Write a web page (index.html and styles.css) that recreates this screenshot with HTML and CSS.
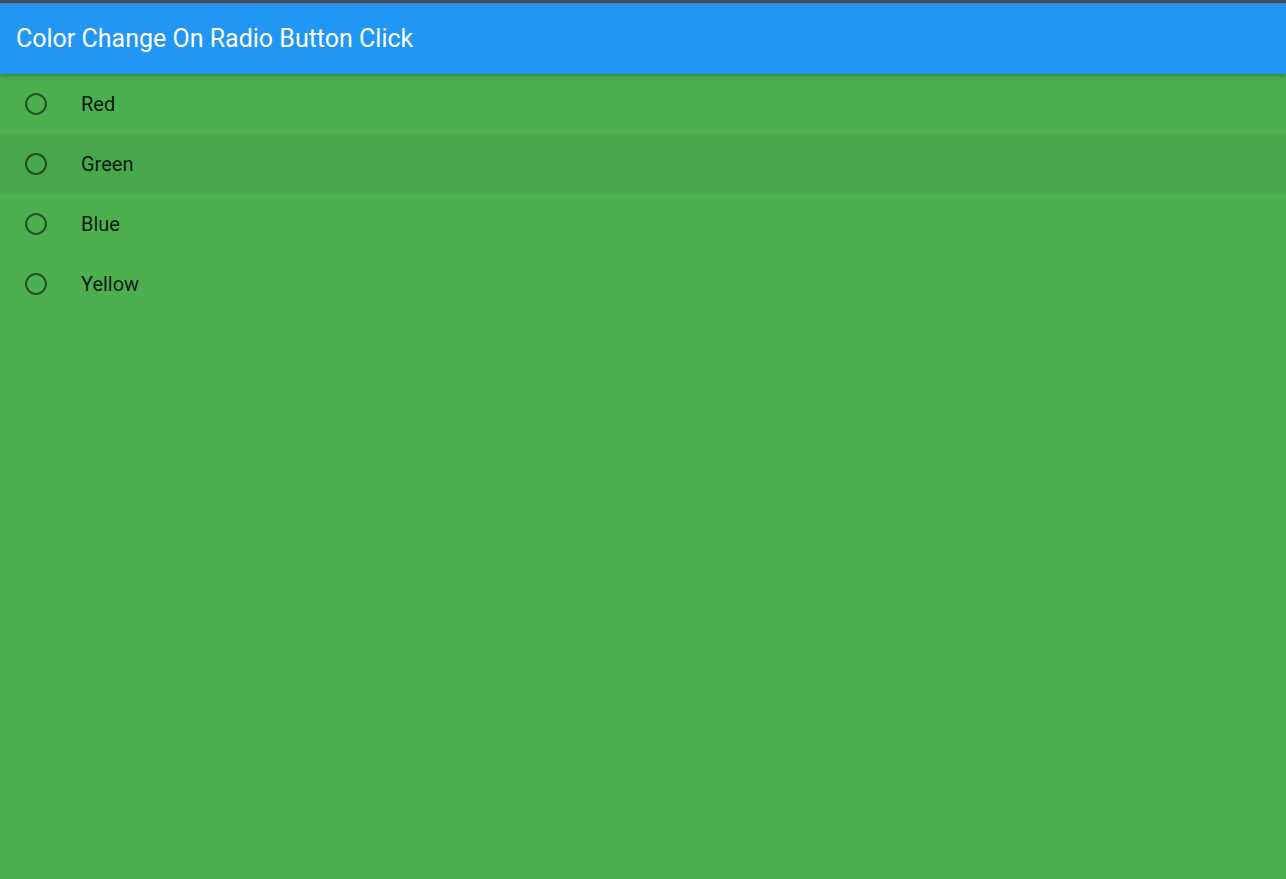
FILE: index.html
```html
<!DOCTYPE html>
<html lang="en">
<head>
<meta charset="utf-8">
<title>Color Change On Radio Button Click</title>
<link rel="stylesheet" href="styles.css">
</head>
<body>
<div class="topline"></div>
<header class="appbar"><h1 class="title">Color Change On Radio Button Click</h1></header>
<main class="list">
  <div class="tile"><span class="radio"></span><span class="label">Red</span></div>
  <div class="tile hover"><span class="radio"></span><span class="label">Green</span></div>
  <div class="tile"><span class="radio"></span><span class="label">Blue</span></div>
  <div class="tile"><span class="radio"></span><span class="label">Yellow</span></div>
</main>
</body>
</html>
```
FILE: styles.css
```css
html, body {
  margin: 0;
  padding: 0;
  height: 100%;
}
body {
  background: #4caf50;
  font-family: Roboto, "Liberation Sans", sans-serif;
  display: flex;
  flex-direction: column;
  overflow: hidden;
}
.topline {
  height: 3px;
  background: #4a4c50;
  flex: none;
}
.appbar {
  height: 71px;
  background: #2196f3;
  display: flex;
  align-items: center;
  padding-left: 16px;
  box-shadow: 0 2px 4px rgba(0,0,0,0.25);
  position: relative;
  z-index: 1;
  flex: none;
}
.title {
  margin: 0;
  color: #fff;
  font-size: 25px;
  font-weight: 400;
  letter-spacing: 0;
}
.list {
  display: flex;
  flex-direction: column;
}
.tile {
  height: 60px;
  display: flex;
  align-items: center;
  padding-left: 25px;
}
.tile.hover {
  background: rgba(0,0,0,0.04);
}
.radio {
  width: 18px;
  height: 18px;
  border: 2px solid rgba(0,0,0,0.54);
  border-radius: 50%;
  box-sizing: content-box;
  flex: none;
}
.label {
  margin-left: 34px;
  font-size: 20px;
  color: rgba(0,0,0,0.87);
}
```
